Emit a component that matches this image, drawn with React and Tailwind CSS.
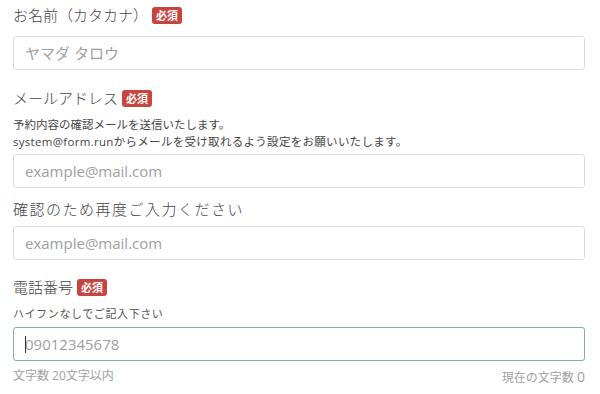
import React from "react";

const font = {
  fontFamily: '"Open Sans", "Noto Sans CJK JP", sans-serif',
};

function Badge() {
  return (
    <span className="ml-[4px] inline-flex h-[17px] items-center rounded-[3px] bg-[#c9443e] px-[4px] text-[11px] font-bold leading-none text-white">
      必須
    </span>
  );
}

function Label({ children, required, className = "" }) {
  return (
    <div className={"flex h-[22px] items-center text-[15px] font-light text-[#444] " + className}>
      <span>{children}</span>
      {required && <Badge />}
    </div>
  );
}

function Field({ placeholder, className = "", focused }) {
  return (
    <div className={"relative " + className}>
      <input
        readOnly
        placeholder={placeholder}
        className={
          "block h-[34px] w-full rounded-[3px] border bg-white px-[11px] text-[15px] text-[#555] outline-none placeholder:text-[#a0a0a0] " +
          (focused ? "border-[#82a8c8]" : "border-[#dcdcdc]")
        }
      />
      {focused && (
        <span className="absolute left-[12px] top-[9px] h-[17px] w-px bg-[#333]" />
      )}
    </div>
  );
}

export default function App() {
  return (
    <div className="h-[394px] w-[600px] overflow-hidden bg-white px-[13px] pt-[4px]" style={font}>
      <div className="w-[572px]">
        <Label required>お名前（カタカナ）</Label>
        <Field placeholder="ヤマダ タロウ" className="mt-[10px]" />

        <Label required className="mt-[17px]">メールアドレス</Label>
        <div className="mt-[7px] text-[11.5px] leading-[17px] text-[#444]">
          <div>予約内容の確認メールを送信いたします。</div>
          <div className="tracking-[0.3px]">system@form.runからメールを受け取れるよう設定をお願いいたします。</div>
        </div>
        <Field placeholder="example@mail.com" className="mt-[4px]" />

        <Label className="mt-[10px] tracking-[1.5px]">確認のため再度ご入力ください</Label>
        <Field placeholder="example@mail.com" className="mt-[6px]" />

        <Label required className="mt-[16px]">電話番号</Label>
        <div className="mt-[7px] text-[11px] leading-[17px] text-[#555] tracking-[0.6px]">
          ハイフンなしでご記入下さい
        </div>
        <Field placeholder="09012345678" className="mt-[5px]" focused />

        <div className="mt-[6px] flex h-[18px] items-center justify-between text-[12px] text-[#a0a0a0]">
          <span>文字数 20文字以内</span>
          <span>
            現在の文字数 <span className="text-[14px]">0</span>
          </span>
        </div>
      </div>
    </div>
  );
}
